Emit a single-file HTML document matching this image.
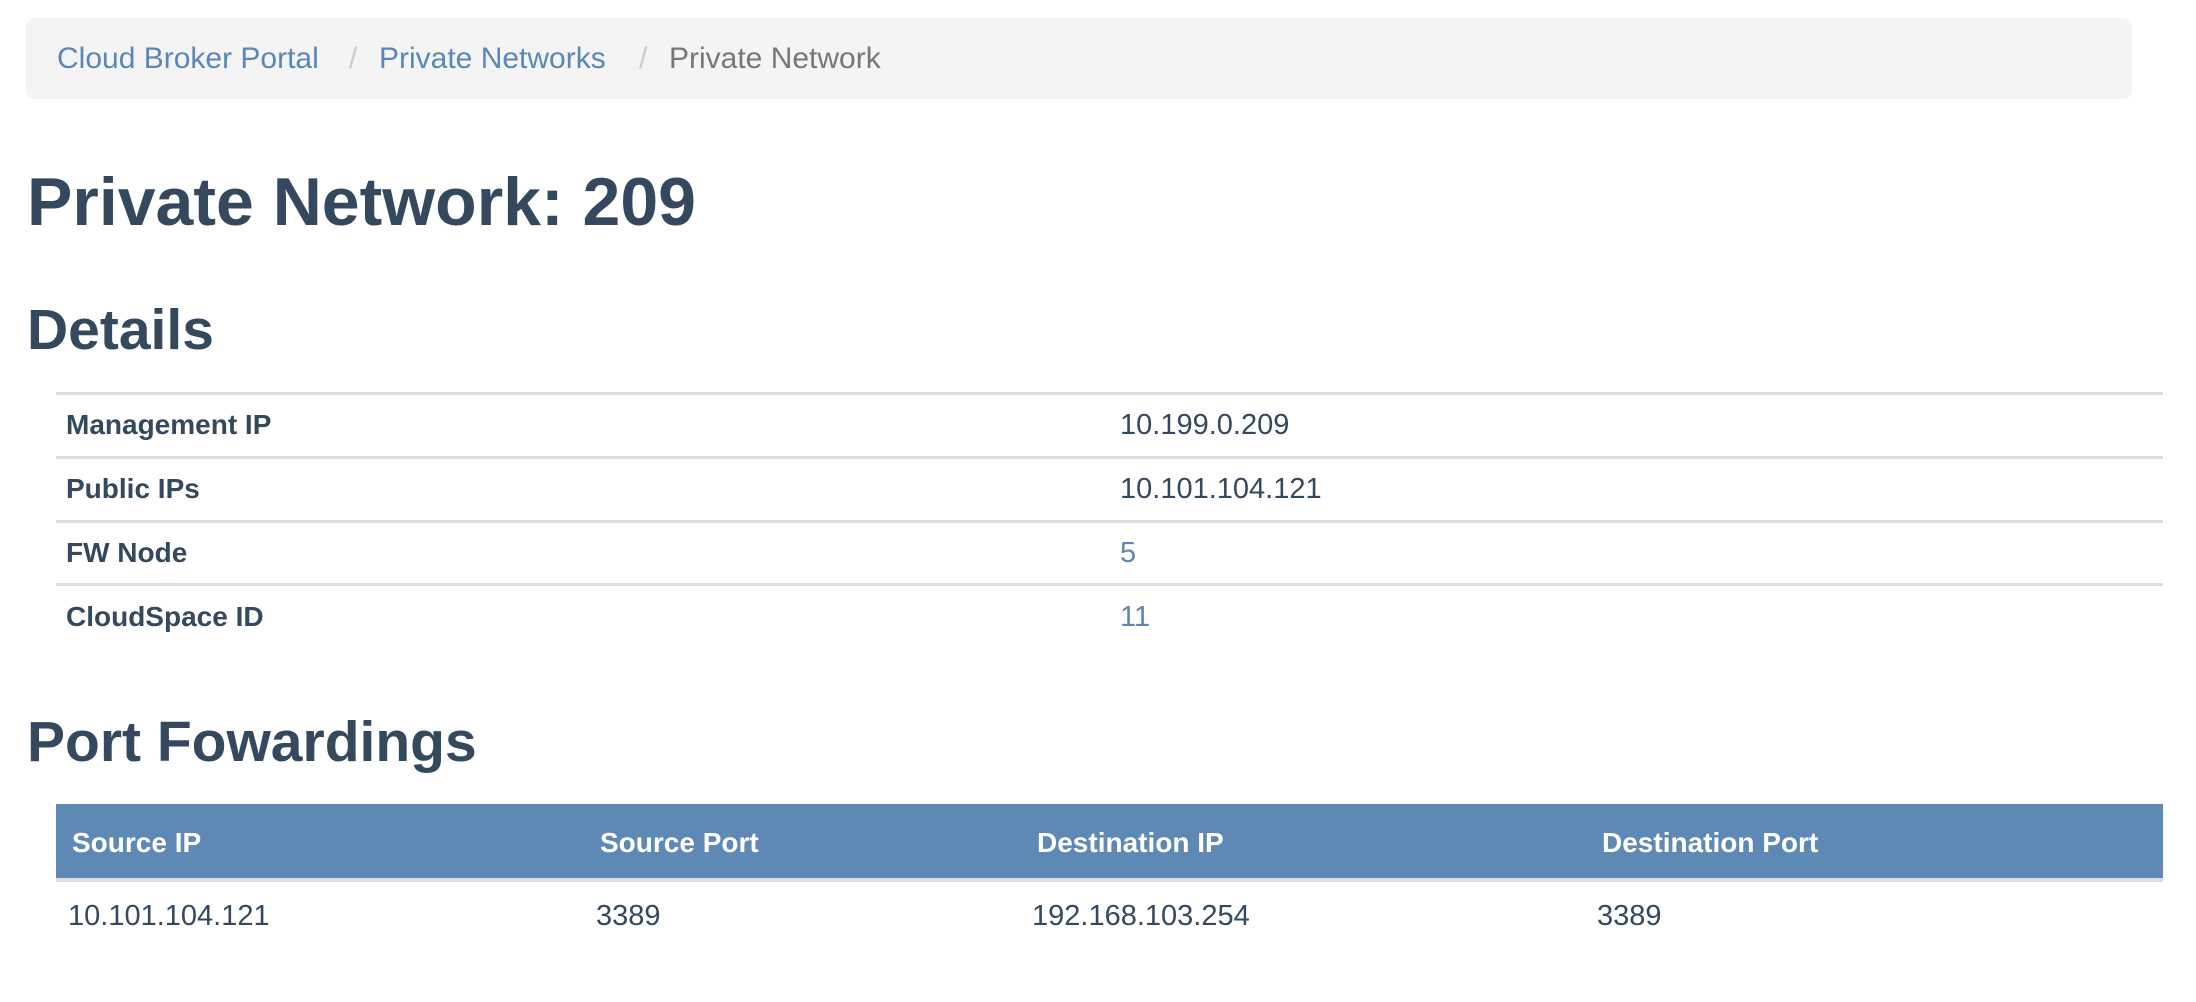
<!DOCTYPE html>
<html><head><meta charset="utf-8"><style>
html,body{margin:0;padding:0;background:#fff;width:2196px;height:1002px;overflow:hidden;font-family:"Liberation Sans",sans-serif;color:#34495e}
.a{position:absolute;white-space:nowrap;line-height:1}
.bc{position:absolute;left:26px;top:18px;width:2106px;height:81px;background:#f4f4f4;border-radius:9px}
.lk{color:#5b87b6}
.b{font-weight:bold}
.ln{position:absolute;left:56px;width:2107px;height:3px;background:#dddddd}
.hd{position:absolute;left:56px;top:804px;width:2107px;height:74px;background:#5e89b4}
.hd2{position:absolute;left:56px;top:878px;width:2107px;height:4px;background:#dddddd}
</style></head><body>
<div class="bc"></div>
<div class="a lk" style="left:57px;top:44px;font-size:30px">Cloud Broker Portal</div>
<div class="a" style="left:349px;top:44px;font-size:30px;color:#ccc">/</div>
<div class="a lk" style="left:379px;top:44px;font-size:30px">Private Networks</div>
<div class="a" style="left:639px;top:44px;font-size:30px;color:#ccc">/</div>
<div class="a" style="left:669px;top:44px;font-size:30px;color:#777">Private Network</div>

<div class="a b" style="left:27px;top:168px;font-size:68px">Private Network: 209</div>
<div class="a b" style="left:27px;top:302px;font-size:57px">Details</div>

<div class="ln" style="top:392px"></div>
<div class="ln" style="top:456px"></div>
<div class="ln" style="top:520px"></div>
<div class="ln" style="top:583px"></div>

<div class="a b" style="left:66px;top:411px;font-size:28px">Management IP</div>
<div class="a" style="left:1120px;top:411px;font-size:29px">10.199.0.209</div>
<div class="a b" style="left:66px;top:475px;font-size:28px">Public IPs</div>
<div class="a" style="left:1120px;top:475px;font-size:29px">10.101.104.121</div>
<div class="a b" style="left:66px;top:539px;font-size:28px">FW Node</div>
<div class="a lk" style="left:1120px;top:539px;font-size:29px">5</div>
<div class="a b" style="left:66px;top:603px;font-size:28px">CloudSpace ID</div>
<div class="a lk" style="left:1120px;top:603px;font-size:29px">11</div>

<div class="a b" style="left:27px;top:714px;font-size:57px">Port Fowardings</div>

<div class="hd"></div><div class="hd2"></div>
<div class="a b" style="left:72px;top:829px;font-size:28px;color:#fff">Source IP</div>
<div class="a b" style="left:600px;top:829px;font-size:28px;color:#fff">Source Port</div>
<div class="a b" style="left:1037px;top:829px;font-size:28px;color:#fff">Destination IP</div>
<div class="a b" style="left:1602px;top:829px;font-size:28px;color:#fff">Destination Port</div>

<div class="a" style="left:68px;top:902px;font-size:29px">10.101.104.121</div>
<div class="a" style="left:596px;top:902px;font-size:29px">3389</div>
<div class="a" style="left:1032px;top:902px;font-size:29px">192.168.103.254</div>
<div class="a" style="left:1597px;top:902px;font-size:29px">3389</div>
</body></html>
